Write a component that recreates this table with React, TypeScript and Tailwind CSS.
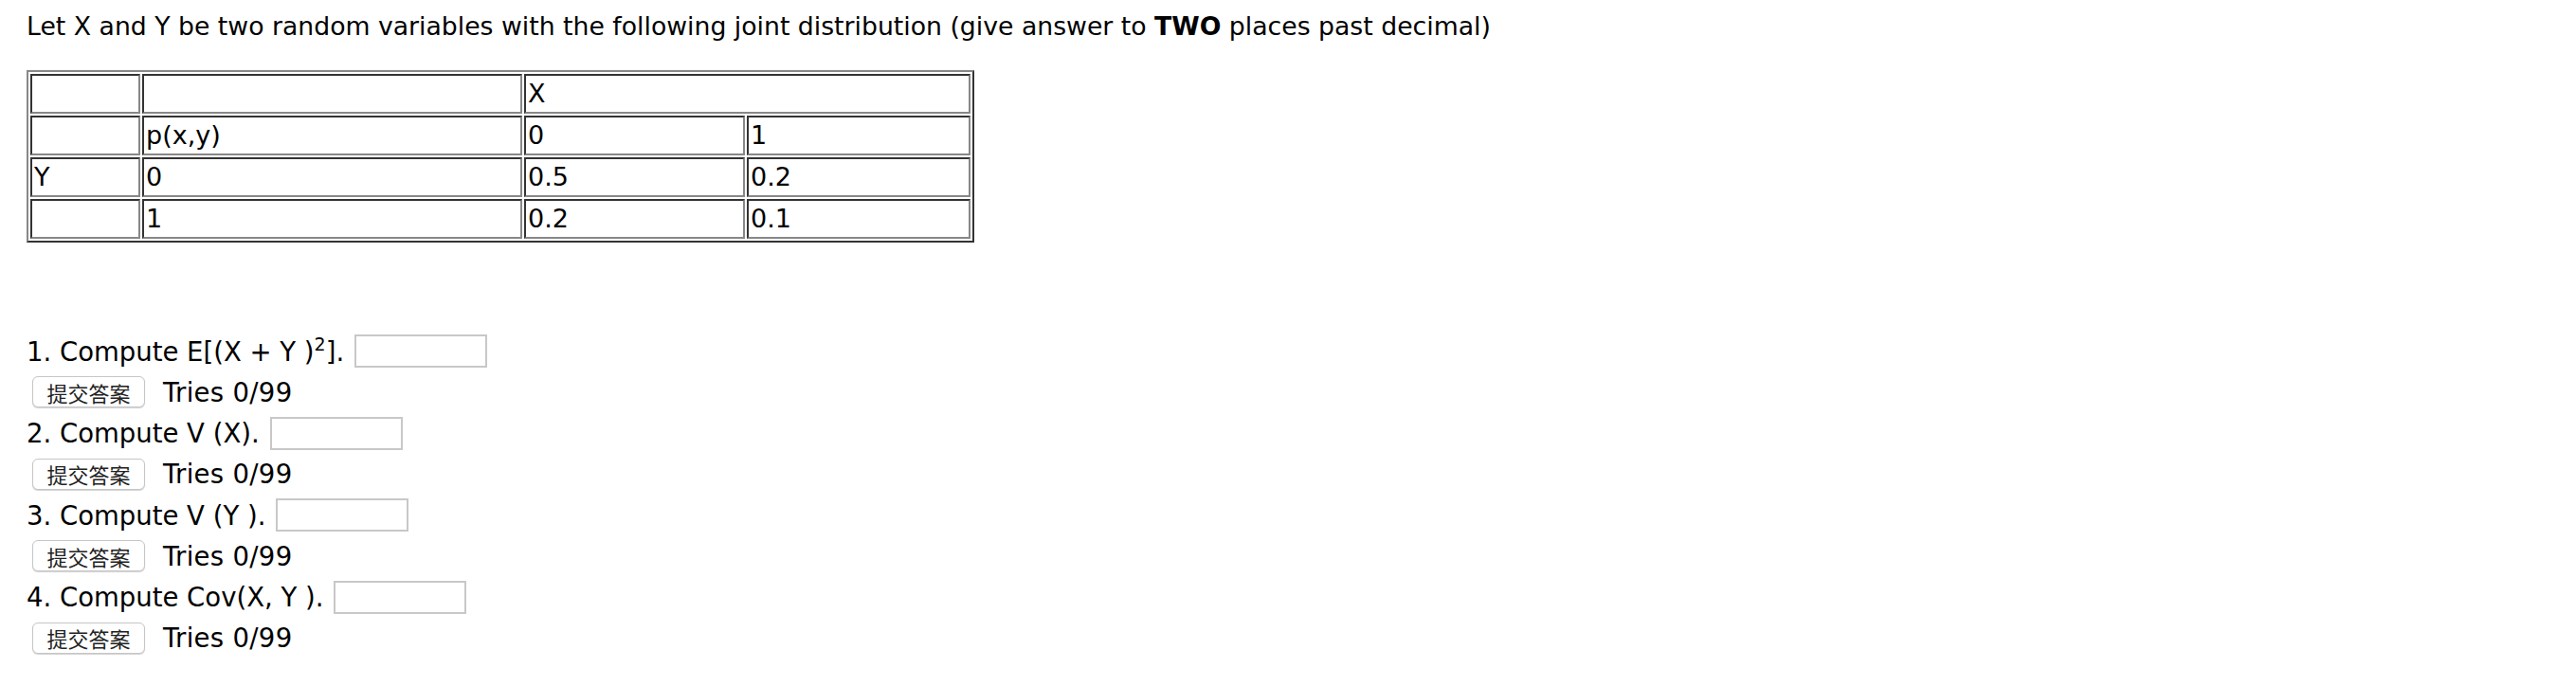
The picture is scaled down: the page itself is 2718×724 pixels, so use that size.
import React from 'react'

// Tableau de la loi jointe + questions

const cellBase =
  'border-2 border-t-[#333] border-l-[#333] border-b-[#888] border-r-[#888] px-[2px] align-middle h-[42px] text-[27px] leading-[30px] text-black'

const questions = [
  { id: 1, label: <>1. Compute E[(X + Y )<sup className="text-[19px] relative -top-[11px]">2</sup>].</> },
  { id: 2, label: <>2. Compute V (X).</> },
  { id: 3, label: <>3. Compute V (Y ).</> },
  { id: 4, label: <>4. Compute Cov(X, Y ).</> },
]

function QuestionBlock({ label }: { label: React.ReactNode }) {
  return (
    <div>
      <div className="flex items-center h-[43px]">
        <span className="text-[27.5px] leading-[32px] text-black">{label}</span>
        <input
          type="text"
          className="ml-[11px] w-[140px] h-[35px] border-2 border-[#c8c8c8] bg-white outline-none"
        />
      </div>
      <div className="flex items-center h-[43.5px]">
        <button
          type="button"
          className="ml-[6px] w-[119px] h-[33px] rounded-[6px] border border-[#c6c6c6] bg-white shadow-[0_1px_1px_rgba(0,0,0,0.18)] text-[22px] leading-none text-[#222]"
          style={{ fontFamily: '"Noto Sans CJK SC", "Noto Sans CJK JP", sans-serif' }}
        >
          提交答案
        </button>
        <span className="ml-[19px] text-[27.5px] tracking-[0.3px] leading-[32px] text-black">Tries 0/99</span>
      </div>
    </div>
  )
}

export default function App() {
  return (
    <div className="min-h-[724px] bg-white pl-[28px] pt-[12px]" style={{ fontFamily: '"DejaVu Sans", Verdana, sans-serif' }}>
      {/* Énoncé */}
      <p className="text-[26.7px] leading-[32px] text-black whitespace-nowrap">
        Let X and Y be two random variables with the following joint distribution (give answer to <b>TWO</b> places past decimal)
      </p>

      {/* Tableau */}
      <table className="mt-[30px] border-separate border-spacing-[2px] border-2 border-t-[#888] border-l-[#888] border-b-[#333] border-r-[#333] w-[1000px]">
        <tbody>
          <tr>
            <td className={`${cellBase} w-[116px]`}></td>
            <td className={`${cellBase} w-[401px]`}></td>
            <td className={cellBase} colSpan={2}>X</td>
          </tr>
          <tr>
            <td className={cellBase}></td>
            <td className={cellBase}>p(x,y)</td>
            <td className={`${cellBase} w-[233px]`}>0</td>
            <td className={`${cellBase} w-[236px]`}>1</td>
          </tr>
          <tr>
            <td className={cellBase}>Y</td>
            <td className={cellBase}>0</td>
            <td className={cellBase}>0.5</td>
            <td className={cellBase}>0.2</td>
          </tr>
          <tr>
            <td className={cellBase}></td>
            <td className={cellBase}>1</td>
            <td className={cellBase}>0.2</td>
            <td className={cellBase}>0.1</td>
          </tr>
        </tbody>
      </table>

      {/* Questions */}
      <div className="mt-[93px]">
        {questions.map((q) => (
          <QuestionBlock key={q.id} label={q.label} />
        ))}
      </div>
    </div>
  )
}
